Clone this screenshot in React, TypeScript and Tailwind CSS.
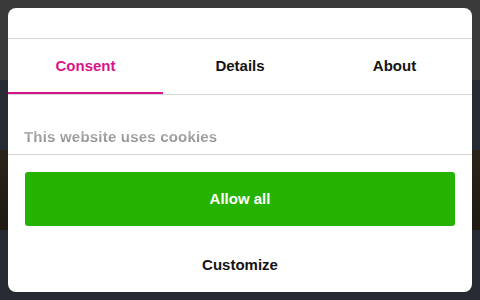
import React from "react";

export default function App() {
  const font = { fontFamily: '"Liberation Sans", Arial, sans-serif' };
  return (
    <div
      className="w-[480px] h-[300px] pt-2 px-2 bg-[linear-gradient(to_bottom,#3a3a3a_0px,#3a3a3a_80px,#262b33_80px,#262b33_150px,#2a2318_150px,#1f1a12_230px,#262a33_230px,#262a33_300px)]"
      style={font}
    >
      <div className="h-[284px] bg-white rounded-lg flex flex-col overflow-hidden">
        <div className="h-[31px] border-b border-[#d6d6d6] shrink-0" />
        <div className="h-[56px] flex border-b border-[#d6d6d6] shrink-0">
          <div className="w-[155px] flex items-center justify-center border-b-2 border-[#d9138a] text-[15px] font-bold text-[#d9138a] pt-[1px]">
            Consent
          </div>
          <div className="flex-1 flex items-center justify-center text-[15px] font-bold text-[#141414] pb-[1px]">
            Details
          </div>
          <div className="w-[155px] flex items-center justify-center text-[15px] font-bold text-[#141414] pb-[1px]">
            About
          </div>
        </div>
        <div className="h-[60px] border-b border-[#d6d6d6] shrink-0 px-4 pt-[30px]">
          <div className="text-[15px] font-bold leading-[20px] tracking-[0.2px] text-transparent bg-clip-text bg-gradient-to-b from-[#c4c4c4] to-[#7e7e7e] inline-block">
            This website uses cookies
          </div>
        </div>
        <div className="flex-1 flex flex-col px-[17px] pt-[17px]">
          <div className="h-[54px] rounded-[3px] bg-[#26b200] flex items-center justify-center text-white text-[15px] font-bold">
            Allow all
          </div>
          <div className="flex-1 flex items-center justify-center text-[15px] font-bold text-[#141414] pt-[12px]">
            Customize
          </div>
        </div>
      </div>
    </div>
  );
}
